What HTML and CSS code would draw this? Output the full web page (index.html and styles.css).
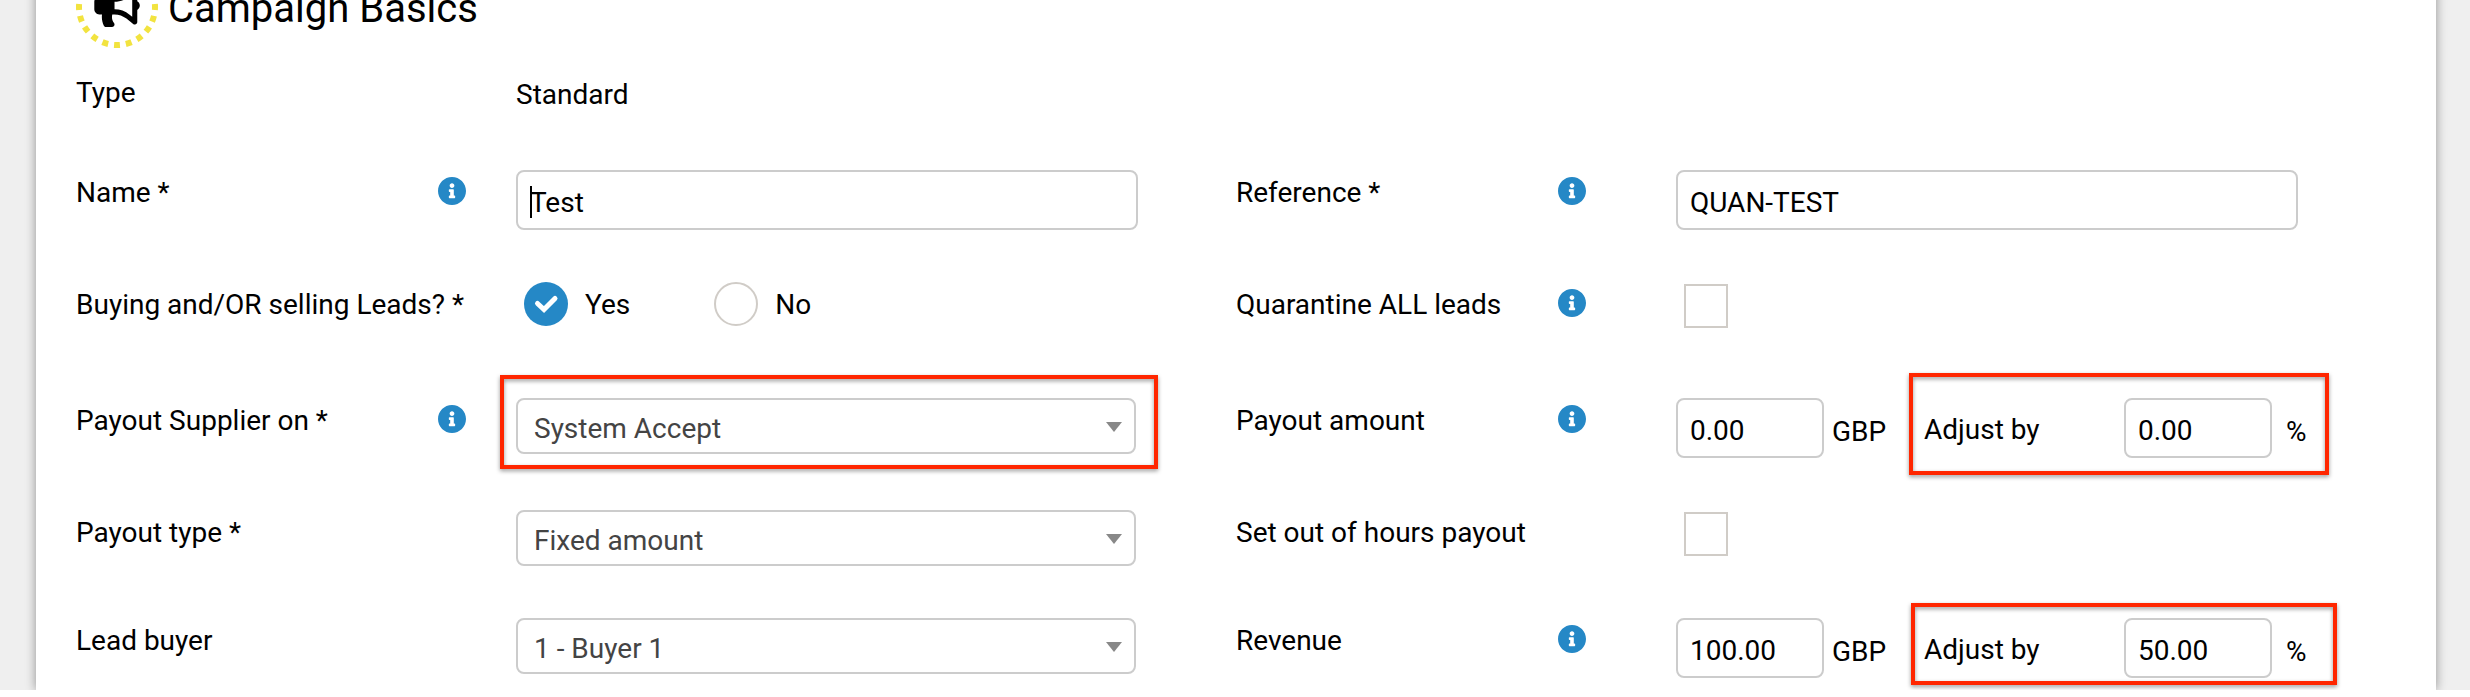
FILE: index.html
```html
<!DOCTYPE html>
<html lang="en">
<head>
    <meta charset="UTF-8">
    <meta name="viewport" content="width=device-width, initial-scale=1.0">

    <title>Campaign Basics</title>
    <link rel="stylesheet" href="styles.css">
</head>
<body>

    <!-- Info icon shared by all the help buttons -->
    <svg class="sprite" aria-hidden="true">
        <symbol id="icon-info" viewBox="8 8 496 496">
            <path d="M256 8C119.043 8 8 119.083 8 256c0 136.997 111.043 248 248 248s248-111.003 248-248C504 119.083 392.957 8 256 8zm0 110c23.196 0 42 18.804 42 42s-18.804 42-42 42-42-18.804-42-42 18.804-42 42-42zm56 254c0 6.627-5.373 12-12 12h-88c-6.627 0-12-5.373-12-12v-24c0-6.627 5.373-12 12-12h12v-64h-12c-6.627 0-12-5.373-12-12v-24c0-6.627 5.373-12 12-12h64c6.627 0 12 5.373 12 12v100h12c6.627 0 12 5.373 12 12v24z"/>
        </symbol>
    </svg>

    <main class="page">
        <form class="panel">
            <header class="panel-header">
                <svg class="panel-icon" viewBox="0 0 82 82" aria-hidden="true">
                    <circle class="ring" cx="41" cy="41" r="38" pathLength="200"/>
                    <path transform="translate(18.3 20.6) scale(0.079)" d="M576 240c0-23.63-12.95-44.04-32-55.12V32.01C544 23.26 537.02 0 512 0c-7.12 0-14.19 2.38-19.98 7.02l-85.03 68.03C364.28 109.19 310.66 128 256 128H64c-35.35 0-64 28.65-64 64v96c0 35.35 28.65 64 64 64h33.7c-1.39 10.48-2.18 21.14-2.18 32 0 39.77 9.26 77.35 25.56 110.94 5.19 10.69 16.52 17.06 28.4 17.06h74.28c26.05 0 41.69-29.84 25.9-50.56-16.4-21.52-26.15-48.36-26.15-77.44 0-11.11 1.62-21.79 4.41-32H256c54.66 0 108.28 18.81 150.98 52.95l85.03 68.03a32.023 32.023 0 0 0 19.98 7.02c24.92 0 32-22.78 32-32V295.13C563.05 284.04 576 263.63 576 240zm-96 141.42l-33.05-26.44C392.95 311.78 325.12 288 256 288v-96c69.12 0 136.95-23.78 190.95-66.98L480 98.58v282.84z"/>
                </svg>
                <h1>Campaign Basics</h1>
            </header>

            <div class="form-row type-row">
                <div class="form-group">
                    <div class="form-label"><span>Type</span></div>
                    <div class="form-field"><span class="static-text">Standard</span></div>
                </div>
            </div>

            <div class="form-row">
                <div class="form-group">
                    <div class="form-label">
                        <label for="name">Name *</label>
                        <button type="button" class="info" aria-label="About name"><svg><use href="#icon-info"/></svg></button>
                    </div>
                    <div class="form-field text-field">
                        <input type="text" id="name" name="name" value="Test">
                        <span class="caret"></span>
                    </div>
                </div>
                <div class="form-group">
                    <div class="form-label">
                        <label for="reference">Reference *</label>
                        <button type="button" class="info" aria-label="About reference"><svg><use href="#icon-info"/></svg></button>
                    </div>
                    <div class="form-field">
                        <input type="text" id="reference" name="reference" value="QUAN-TEST">
                    </div>
                </div>
            </div>

            <div class="form-row choice-row">
                <div class="form-group" role="radiogroup" aria-labelledby="buying-label">
                    <div class="form-label"><span id="buying-label">Buying and/OR selling Leads? *</span></div>
                    <div class="form-field radio-list">
                        <label class="radio"><input type="radio" name="buying" value="yes" checked><span>Yes</span></label>
                        <label class="radio"><input type="radio" name="buying" value="no"><span>No</span></label>
                    </div>
                </div>
                <div class="form-group">
                    <div class="form-label">
                        <label for="quarantine">Quarantine ALL leads</label>
                        <button type="button" class="info" aria-label="About quarantine"><svg><use href="#icon-info"/></svg></button>
                    </div>
                    <div class="form-field"><input type="checkbox" id="quarantine" name="quarantine"></div>
                </div>
            </div>

            <div class="form-row">
                <div class="form-group">
                    <div class="form-label">
                        <label for="payout-on">Payout Supplier on *</label>
                        <button type="button" class="info" aria-label="About payout supplier"><svg><use href="#icon-info"/></svg></button>
                    </div>
                    <div class="form-field">
                        <div class="select highlight highlight-select">
                            <select id="payout-on" name="payout-on">
                                <option>System Accept</option>
                            </select>
                        </div>
                    </div>
                </div>
                <div class="form-group">
                    <div class="form-label">
                        <label for="payout-amount">Payout amount</label>
                        <button type="button" class="info" aria-label="About payout amount"><svg><use href="#icon-info"/></svg></button>
                    </div>
                    <div class="form-field amount-field">
                        <div class="amount">
                            <input type="text" id="payout-amount" name="payout-amount" value="0.00">
                            <span class="unit">GBP</span>
                        </div>
                        <div class="adjust highlight highlight-payout">
                            <label for="payout-adjust">Adjust by</label>
                            <input type="text" id="payout-adjust" name="payout-adjust" value="0.00">
                            <span class="unit">%</span>
                        </div>
                    </div>
                </div>
            </div>

            <div class="form-row select-row">
                <div class="form-group">
                    <div class="form-label"><label for="payout-type">Payout type *</label></div>
                    <div class="form-field">
                        <div class="select">
                            <select id="payout-type" name="payout-type">
                                <option>Fixed amount</option>
                            </select>
                        </div>
                    </div>
                </div>
                <div class="form-group">
                    <div class="form-label"><label for="out-of-hours">Set out of hours payout</label></div>
                    <div class="form-field"><input type="checkbox" id="out-of-hours" name="out-of-hours"></div>
                </div>
            </div>

            <div class="form-row">
                <div class="form-group">
                    <div class="form-label"><label for="lead-buyer">Lead buyer</label></div>
                    <div class="form-field">
                        <div class="select">
                            <select id="lead-buyer" name="lead-buyer">
                                <option>1 - Buyer 1</option>
                            </select>
                        </div>
                    </div>
                </div>
                <div class="form-group">
                    <div class="form-label">
                        <label for="revenue">Revenue</label>
                        <button type="button" class="info" aria-label="About revenue"><svg><use href="#icon-info"/></svg></button>
                    </div>
                    <div class="form-field amount-field">
                        <div class="amount">
                            <input type="text" id="revenue" name="revenue" value="100.00">
                            <span class="unit">GBP</span>
                        </div>
                        <div class="adjust highlight highlight-revenue">
                            <label for="revenue-adjust">Adjust by</label>
                            <input type="text" id="revenue-adjust" name="revenue-adjust" value="50.00">
                            <span class="unit">%</span>
                        </div>
                    </div>
                </div>
            </div>
        </form>
    </main>

</body>
</html>
```
FILE: styles.css
```css
* {
    box-sizing: border-box;
}

body {
    margin: 0;
    background-color: white;
    color: black;
    font-family: Roboto, Arial, sans-serif;
    font-size: 28px;
    line-height: 32px;
}

.sprite {
    display: none;
}

.page {
    background-color: #efefef;
    padding: 0 34px 0 36px;
    overflow: hidden;
}

/* The top of the panel is scrolled out of view */
.panel {
    background-color: white;
    margin-top: -60px;
    padding: 26px 40px 12px;
    box-shadow: 0 0 10px rgba(0, 0, 0, 0.4);
}

.panel-header {
    display: flex;
    align-items: center;
    gap: 10px;
    margin-bottom: 22px;
}

.panel-header h1 {
    margin: 0;
    padding-top: 4px;
    font-size: 40px;
    font-weight: 400;
    line-height: 48px;
}

.panel-icon {
    width: 82px;
    height: 82px;
}

.ring {
    fill: none;
    stroke: #f2e33f;
    stroke-width: 6;
    stroke-dasharray: 5 5;
    stroke-dashoffset: 2.5;
}

/* Rows */
.form-row {
    display: grid;
    grid-template-columns: minmax(0, 1fr) minmax(0, 1fr);
    min-height: 60px;
    margin-bottom: 52px;
}

.form-row:last-child {
    margin-bottom: 0;
}

.type-row {
    min-height: 48px;
}

.choice-row {
    min-height: 64px;
}

.select-row {
    min-height: 56px;
}

.form-group {
    display: flex;
    align-items: flex-start;
}

.form-label {
    display: flex;
    justify-content: space-between;
    flex: 0 0 440px;
    padding: 7px 50px 0 0;
    white-space: nowrap;
}

.form-group:nth-child(2) .form-label {
    padding-right: 90px;
}

.form-field {
    flex: 1;
    min-width: 0;
    margin-right: 98px;
}

.static-text {
    display: block;
    padding-top: 9px;
}

.info {
    width: 28px;
    height: 28px;
    padding: 0;
    border: none;
    background: none;
    cursor: pointer;
}

.info svg {
    display: block;
    width: 28px;
    height: 28px;
    fill: #2588c6;
}

/* Controls */
input,
select {
    font: inherit;
    color: inherit;
}

input[type="text"] {
    display: block;
    width: 100%;
    height: 60px;
    padding: 4px 12px 0;
    border: 2px solid #ccc;
    border-radius: 8px;
    background-color: white;
}

.text-field {
    position: relative;
}

.caret {
    position: absolute;
    left: 14px;
    top: 16px;
    width: 2px;
    height: 32px;
    background-color: black;
}

.select {
    position: relative;
    margin-right: 2px;
}

.select select {
    display: block;
    width: 100%;
    height: 56px;
    padding: 6px 40px 0 16px;
    border: 2px solid #ccc;
    border-radius: 8px;
    background-color: white;
    color: #444;
    appearance: none;
}

.select::before {
    content: "";
    position: absolute;
    right: 14px;
    top: 24px;
    border: 8px solid transparent;
    border-top: 10px solid #888;
    border-bottom: none;
    pointer-events: none;
}

input[type="checkbox"] {
    display: block;
    appearance: none;
    width: 44px;
    height: 44px;
    margin: 2px 0 0 8px;
    border: 2px solid #d0ccc7;
    background-color: white;
}

.radio-list {
    display: flex;
    gap: 84px;
    padding-left: 8px;
}

.radio {
    display: flex;
    gap: 17px;
}

.radio span {
    padding-top: 7px;
}

.radio input {
    appearance: none;
    width: 44px;
    height: 44px;
    margin: 0;
    border: 2px solid #d0ccc7;
    border-radius: 50%;
}

.radio input:checked {
    border: none;
    background: #2588c6 url("data:image/svg+xml,%3Csvg xmlns='http://www.w3.org/2000/svg' viewBox='0 0 44 44'%3E%3Cpath d='M13.500 21.500l6.500 6 11-11' fill='none' stroke='white' stroke-width='5' stroke-linecap='round'/%3E%3C/svg%3E") center / 44px 44px no-repeat;
}

/* Amounts */
.amount-field,
.amount,
.adjust {
    display: flex;
    align-items: flex-start;
}

.amount-field {
    margin-right: 0;
}

.amount {
    flex: 0 0 248px;
    gap: 8px;
}

.adjust label {
    width: 200px;
    padding-top: 16px;
}

.amount input[type="text"],
.adjust input[type="text"] {
    width: 148px;
}

.unit {
    padding-top: 18px;
}

.adjust .unit {
    padding-left: 14px;
}

/* Red frames around the fields to look at */
.highlight {
    position: relative;
}

.highlight::after {
    content: "";
    position: absolute;
    border: 4px solid #ff2600;
    filter: drop-shadow(0 2px 2px rgba(0, 0, 0, 0.4));
    pointer-events: none;
}

.highlight-select::after {
    inset: -23px -22px -15px -16px;
}

.highlight-payout::after {
    inset: -25px -22px -17px -15px;
}

.highlight-revenue::after {
    inset: -15px -30px -7px -13px;
}
```
